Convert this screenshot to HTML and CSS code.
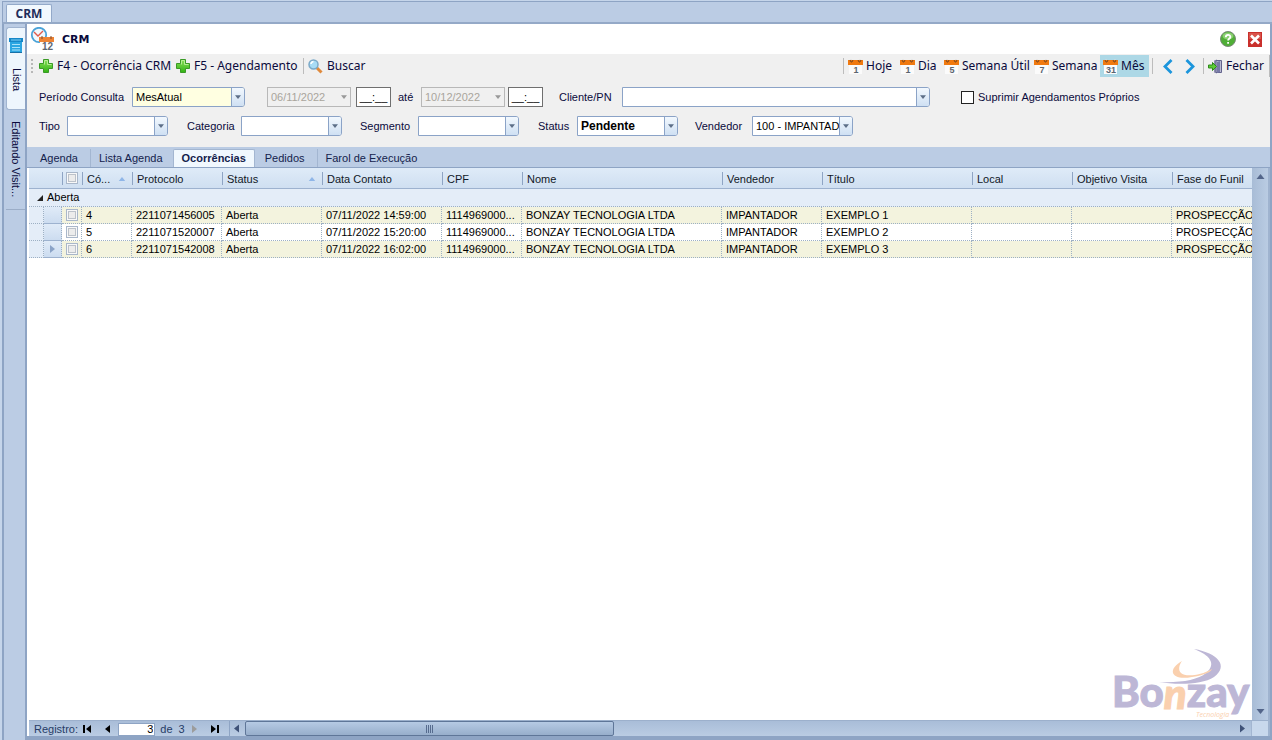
FILE: index.html
```
<!DOCTYPE html>
<html lang="pt-BR">
<head>
<meta charset="utf-8">
<title>CRM</title>
<link rel="stylesheet" href="styles.css">
</head>
<body>
<svg class="defs" width="0" height="0" aria-hidden="true">
  <defs>
    <linearGradient id="green" x1="0" y1="0" x2="0" y2="1"><stop offset="0" stop-color="#8be05a"/><stop offset="1" stop-color="#32b414"/></linearGradient>
    <symbol id="plus" viewBox="0 0 14 14"><path d="M4.5.5h5v4h4v5h-4v4h-5v-4h-4v-5h4z" fill="url(#green)" stroke="#3a9a26"/><path d="M5.5 5.5v-4h3v4h4" fill="none" stroke="#b5ee92"/></symbol>
    <symbol id="cal" viewBox="0 0 15 15"><path d="M1 5h13v10H1z" fill="#fbfbfb"/><path d="M0 1h15v5H0z" fill="#f0790f"/><path d="M2 1l1 2h1l1-2M10 1l1 2h1l1-2" fill="none" stroke="#7c4a20"/><path d="M3 0v1M12 0v1" stroke="#ddd"/></symbol>
    <symbol id="tri-d" viewBox="0 0 8 5"><path d="M0 0h8L4 5z"/></symbol>
    <symbol id="tri-u" viewBox="0 0 8 5"><path d="M0 5h8L4 0z"/></symbol>
    <symbol id="tri-l" viewBox="0 0 5 8"><path d="M5 0v8L0 4z"/></symbol>
    <symbol id="tri-r" viewBox="0 0 5 8"><path d="M0 0v8l5-4z"/></symbol>
  </defs>
</svg>
<div class="window">
  <div class="doc-tabs"><button class="doc-tab">CRM</button></div>
  <div class="workspace">
    <nav class="side">
      <button class="side-tab active">
        <svg width="14" height="16" viewBox="0 0 14 16"><path d="M0 1h14v4H0z" fill="#1687c8"/><path d="M1 5h12v10H1z" fill="#2ba6e2"/><path d="M2 3h10" stroke="#7fd0f5"/><path d="M3 7.500h8M3 10.500h8M3 13h8" stroke="#a9e2fa"/><path d="M1 15.500h12" stroke="#1670a8"/></svg>
        <span>Lista</span>
      </button>
      <button class="side-tab"><span>Editando Visit...</span></button>
    </nav>
    <main class="main">
      <header class="title">
        <svg width="26" height="24" viewBox="0 0 26 24"><circle cx="9" cy="8" r="7.200" fill="#f2f8fc" stroke="#4aa3d8" stroke-width="1.800"/><path d="M4 5l4 4 5-5" fill="none" stroke="#df5b4e" stroke-width="1.400"/><path d="M10 14h14v10H10z" fill="#fff"/><path d="M9 10h15v5H9z" fill="#ee8434"/><path d="M12 9v3M21 9v3" stroke="#7b4a30"/><text x="12" y="23" class="cal-big">12</text></svg>
        <h1>CRM</h1>
        <button class="icon-btn help" aria-label="Ajuda"><svg width="16" height="16" viewBox="0 0 16 16"><circle cx="8" cy="8" r="7.500" fill="#4fae36" stroke="#7a8a78"/><ellipse cx="8" cy="5" rx="5.500" ry="3.500" fill="#8ad071"/><path d="M5.800 6.300c0-3.200 4.600-3 4.600-.4 0 1.600-2.300 1.600-2.300 3.700M8.100 11v1.800" fill="none" stroke="#fff" stroke-width="1.800"/></svg></button>
        <button class="icon-btn" aria-label="Fechar janela"><svg width="14" height="15" viewBox="0 0 14 15"><path d="M0 0h14v15H0z" fill="#c9302c"/><path d="M1 1h12v6H1z" fill="#d9534a"/><path d="M3 3.500l8 8M11 3.500l-8 8" stroke="#fff" stroke-width="2.600"/></svg></button>
      </header>
      <div class="toolbar">
        <span class="grip"></span>
        <button class="tool new"><svg width="14" height="14"><use href="#plus"/></svg>F4 - Ocorrência CRM</button>
        <button class="tool new"><svg width="14" height="14"><use href="#plus"/></svg>F5 - Agendamento</button>
        <span class="sep"></span>
        <button class="tool"><svg width="15" height="15" viewBox="0 0 15 15"><path d="M8.500 8.500l5 5" stroke="#e08a3c" stroke-width="3"/><circle cx="5.500" cy="5.500" r="4.500" fill="#a8dcf6" stroke="#7ba9c8" stroke-width="1.500"/><path d="M3 5q0-2 2.500-2.500" stroke="#fff" fill="none" stroke-width="1.500"/></svg>Buscar</button>
        <span class="spacer"></span>
        <span class="sep"></span>
        <button class="tool cal day"><svg width="15" height="15"><use href="#cal"/><text x="8" y="14">1</text></svg>Hoje</button>
        <button class="tool cal one"><svg width="15" height="15"><use href="#cal"/><text x="8" y="14">1</text></svg>Dia</button>
        <button class="tool cal work"><svg width="15" height="15"><use href="#cal"/><text x="8" y="14">5</text></svg>Semana Útil</button>
        <button class="tool cal week"><svg width="15" height="15"><use href="#cal"/><text x="8" y="14">7</text></svg>Semana</button>
        <button class="tool cal month"><svg width="15" height="15"><use href="#cal"/><text x="8" y="14">31</text></svg>Mês</button>
        <span class="sep"></span>
        <button class="tool step" aria-label="Anterior"><svg width="10" height="15" viewBox="0 0 10 15"><path d="M8.500 1L2 7.500 8.500 14" fill="none" stroke="#1b95dc" stroke-width="2.800"/></svg></button>
        <button class="tool step" aria-label="Próximo"><svg width="10" height="15" viewBox="0 0 10 15"><path d="M1.500 1L8 7.500 1.500 14" fill="none" stroke="#1b95dc" stroke-width="2.800"/></svg></button>
        <span class="sep"></span>
        <button class="tool close"><svg width="15" height="15" viewBox="0 0 15 15"><path d="M6 1.500l3-1v14l-3-1z" fill="#8f8fb0"/><path d="M8 1.500h5.500v12H8z" fill="#b9bad2" stroke="#62638c"/><path d="M9 3l3-1v11l-3 1z" fill="#7779a6"/><path d="M.5 6h4V3.500L8.500 7.500l-4 4V9h-4z" fill="#5ccc35" stroke="#2f8a1c"/></svg>Fechar</button>
        <span class="sep"></span>
      </div>
      <form class="filters">
        <div class="row first">
          <label for="periodo">Período Consulta</label>
          <span class="combo period"><select id="periodo"><option>MesAtual</option></select><svg width="6" height="4"><use href="#tri-d"/></svg></span>
          <span class="combo date off"><input aria-label="Data inicial" value="06/11/2022" disabled><svg width="6" height="4"><use href="#tri-d"/></svg></span>
          <input class="time" aria-label="Hora inicial" value="__:__">
          <span>até</span>
          <span class="combo date off"><input aria-label="Data final" value="10/12/2022" disabled><svg width="6" height="4"><use href="#tri-d"/></svg></span>
          <input class="time" aria-label="Hora final" value="__:__">
          <label for="cliente">Cliente/PN</label>
          <span class="combo client"><select id="cliente"><option></option></select><svg width="6" height="4"><use href="#tri-d"/></svg></span>
          <label class="check"><input type="checkbox">Suprimir Agendamentos Próprios</label>
        </div>
        <div class="row second">
          <label for="tipo">Tipo</label>
          <span class="combo"><select id="tipo"><option></option></select><svg width="6" height="4"><use href="#tri-d"/></svg></span>
          <label for="categoria">Categoria</label>
          <span class="combo"><select id="categoria"><option></option></select><svg width="6" height="4"><use href="#tri-d"/></svg></span>
          <label for="segmento">Segmento</label>
          <span class="combo"><select id="segmento"><option></option></select><svg width="6" height="4"><use href="#tri-d"/></svg></span>
          <label for="status">Status</label>
          <span class="combo strong"><select id="status"><option>Pendente</option></select><svg width="6" height="4"><use href="#tri-d"/></svg></span>
          <label for="vendedor">Vendedor</label>
          <span class="combo"><select id="vendedor"><option>100 - IMPANTADOR</option></select><svg width="6" height="4"><use href="#tri-d"/></svg></span>
        </div>
      </form>
      <div class="tabs">
        <button class="tab">Agenda</button><button class="tab line">Lista Agenda</button><button class="tab active">Ocorrências</button><button class="tab">Pedidos</button><button class="tab line">Farol de Execução</button>
      </div>
      <section class="grid">
        <div class="view">
          <table>
            <colgroup><col class="w15"><col class="w18"><col class="w20"><col class="w50"><col class="w90"><col class="w100"><col class="w120"><col class="w80"><col class="w200"><col class="w100"><col class="w150"><col class="w100"><col class="w100"><col></colgroup>
            <thead><tr><th colspan="2"></th><th class="tick"><input type="checkbox" aria-label="Selecionar todos"></th><th>Có...<svg width="8" height="4"><use href="#tri-u"/></svg></th><th>Protocolo</th><th>Status<svg width="8" height="4"><use href="#tri-u"/></svg></th><th>Data Contato</th><th>CPF</th><th>Nome</th><th>Vendedor</th><th>Título</th><th>Local</th><th>Objetivo Visita</th><th>Fase do Funil</th></tr></thead>
            <tbody>
              <tr class="group"><td colspan="14"><svg width="6" height="6" viewBox="0 0 6 6"><path d="M6 0v6H0z" fill="#222"/></svg>Aberta</td></tr>
              <tr class="alt"><td class="indent"></td><td class="mark"></td><td class="tick"><input type="checkbox" aria-label="Selecionar 4"></td><td>4</td><td>2211071456005</td><td>Aberta</td><td>07/11/2022 14:59:00</td><td>1114969000...</td><td>BONZAY TECNOLOGIA LTDA</td><td>IMPANTADOR</td><td>EXEMPLO 1</td><td></td><td></td><td>PROSPECÇÃO</td></tr>
              <tr><td class="indent"></td><td class="mark"></td><td class="tick"><input type="checkbox" aria-label="Selecionar 5"></td><td>5</td><td>2211071520007</td><td>Aberta</td><td>07/11/2022 15:20:00</td><td>1114969000...</td><td>BONZAY TECNOLOGIA LTDA</td><td>IMPANTADOR</td><td>EXEMPLO 2</td><td></td><td></td><td>PROSPECÇÃO</td></tr>
              <tr class="alt"><td class="indent"></td><td class="mark"><svg width="5" height="8"><use href="#tri-r"/></svg></td><td class="tick"><input type="checkbox" aria-label="Selecionar 6"></td><td>6</td><td>2211071542008</td><td>Aberta</td><td>07/11/2022 16:02:00</td><td>1114969000...</td><td>BONZAY TECNOLOGIA LTDA</td><td>IMPANTADOR</td><td>EXEMPLO 3</td><td></td><td></td><td>PROSPECÇÃO</td></tr>
            </tbody>
          </table>
          <svg class="logo" width="138" height="72" viewBox="0 0 138 72">
            <text x="-2" y="59" class="brand">Bo<tspan class="peach" dy="2">n</tspan><tspan dy="-2">zay</tspan></text>
            <text x="82" y="69" class="sub">Tecnologia</text>
            <path d="M80 1C104 5 115 18 100 29C88 37 62 37 45 34C66 35 84 32 92 25C103 16 96 7 80 1Z" fill="#bdb7d6"/>
            <path d="M68 13C52 22 58 33 78 29C92 27 98 23 98 21C86 28 71 29 67 25C64 22 65 17 68 13Z" fill="#fad0ae"/>
          </svg>
        </div>
        <div class="vscroll"><svg width="9" height="5"><use href="#tri-u"/></svg><svg width="9" height="5"><use href="#tri-d"/></svg></div>
        <footer class="foot">
          <div class="pager">
            <label for="reg">Registro:</label>
            <button aria-label="Primeiro"><svg width="9" height="8" viewBox="0 0 9 8"><path d="M0 0h2v8H0zM8 0v8L3 4z"/></svg></button>
            <button aria-label="Registro anterior"><svg width="5" height="8"><use href="#tri-l"/></svg></button>
            <input id="reg" value="3">
            <span class="of">de</span><span>3</span>
            <button class="dim" aria-label="Próximo registro"><svg width="5" height="8"><use href="#tri-r"/></svg></button>
            <button aria-label="Último"><svg width="9" height="8" viewBox="0 0 9 8"><path d="M7 0h2v8H7zM1 0v8l5-4z"/></svg></button>
          </div>
          <div class="hscroll"><svg width="5" height="9"><use href="#tri-l"/></svg><div class="thumb"><i></i><i></i><i></i><i></i></div><svg class="end" width="5" height="9"><use href="#tri-r"/></svg></div>
          <div class="corner"></div>
        </footer>
      </section>
    </main>
  </div>
</div>
</body>
</html>
```
FILE: styles.css
```
* { box-sizing: border-box; }
body { margin: 0; background: #c5d5ea; color: #0a0a3c; font: 11px/13px "Liberation Sans", Arial, sans-serif; }
button, input, select { font: inherit; color: inherit; margin: 0; padding: 0; border: 0; border-radius: 0; background: none; }
svg { display: block; flex: none; }
.defs { position: absolute; }

.window { display: flex; flex-direction: column; height: 100vh; padding: 1px 0 0 2px; }
.doc-tabs { height: 23px; padding: 2px 0 0 3px; background: #bbcce4; border-top: 1px solid #8ea4c4; border-left: 1px solid #8ea4c4; border-bottom: 2px solid #94a9c7; }
.doc-tab { width: 46px; height: 18px; background: #f1f8fe; border: 1px solid #93a9c9; border-bottom: 0; border-radius: 2px 2px 0 0; font: bold 12px/16px "Open Sans", sans-serif; color: #1e2d5a; }
.workspace { flex: 1; min-height: 0; display: flex; border-left: 2px solid #8ea4c4; }
.side { width: 23px; padding: 3px 0 0 2px; background: #bbcce4; border-right: 2px solid #8ea4c4; }
.side-tab { display: flex; flex-direction: column; align-items: center; width: 19px; height: 100px; padding-top: 11px; border-bottom: 1px solid #9badc7; font-size: 11px; }
.side-tab.active { height: 83px; gap: 15px; padding-top: 9px; background: #eef6fd; border: 1px solid #a0b4d0; border-right: 0; border-radius: 3px 0 0 3px; }
.side-tab span { writing-mode: vertical-rl; white-space: nowrap; }
.main { flex: 1; min-width: 0; display: flex; flex-direction: column; border-right: 2px solid #8ea4c4; border-bottom: 4px solid #8ea4c4; background: #fff; }

.title { display: flex; align-items: center; height: 30px; padding: 0 8px 0 3px; }
.title h1 { flex: 1; margin: 2px 0 0 6px; font: bold 11px/14px "DejaVu Sans", sans-serif; }
.icon-btn { display: block; }
.help { margin-right: 12px; }
.cal-big { font: bold 10px "Liberation Sans", sans-serif; fill: #606773; }

.toolbar { display: flex; align-items: center; height: 24px; padding: 0 0 0 4px; background: #f0f0f0; font: 12px/16px "Noto Sans", "Open Sans", sans-serif; }
.grip { width: 2px; height: 14px; margin-right: 6px; border-left: 2px dotted #b8b8b8; }
.tool { display: flex; align-items: center; gap: 4px; height: 22px; white-space: nowrap; }
.new { width: 137px; }
.new + .new { width: 127px; }
.sep { width: 1px; height: 16px; margin-right: 4px; background: #bcbcbc; }
.spacer { flex: 1; }
.cal { gap: 3px; }
.cal text { font: bold 9px "Liberation Sans", sans-serif; fill: #5a6470; text-anchor: middle; }
.day { width: 52px; }
.one { width: 44px; }
.work { width: 90px; }
.week { width: 66px; }
.month { width: 49px; padding-left: 3px; margin-right: 3px; background: #add8e6; }
.step { width: 22px; justify-content: center; }
.step + .sep { margin-left: 2px; }
.close { width: 61px; gap: 3px; }
.close + .sep { height: 22px; margin: 0; }

.filters { display: grid; align-content: start; gap: 9px; height: 69px; padding: 9px 0 0 12px; background: #f0f0f0; }
.row { display: grid; align-items: center; height: 20px; white-space: nowrap; }
.first { grid-template-columns: 93px 135px 89px 42px 23px 87px 51px 63px 339px auto; }
.second { grid-template-columns: 28px 120px 54px 119px 58px 120px 39px 118px 57px auto; }
.combo { display: flex; align-items: center; position: relative; width: 101px; height: 20px; background: #fff; border: 1px solid #8ba3c7; border-radius: 0 3px 3px 0; color: #000; }
.combo select, .combo input { appearance: none; flex: 1; min-width: 0; height: 18px; padding: 0 0 0 3px; text-overflow: clip; outline: 0; }
.combo svg { box-sizing: content-box; padding: 7px 3px; height: 4px; fill: #5d6f88; background: linear-gradient(#f2f8fe, #cfe0f3); border-left: 1px solid #8ba3c7; border-radius: 0 2px 2px 0; }
.period { width: 113px; background: #ffffe1; }
.client { width: 308px; }
.date { width: 84px; }
.off { background: #f0f0f0; border-color: #b8b8b8; border-radius: 0; color: #a9a59c; }
.off svg { background: none; border: 0; fill: #999; }
.strong { font-weight: bold; font-size: 12px; }
.time { width: 35px; height: 20px; padding: 0; text-align: center; background: #fff; border: 1px solid #6f6f6f; color: #000; }
.check { display: flex; align-items: center; gap: 4px; }
.check input { appearance: none; width: 13px; height: 13px; background: #fff; border: 1px solid #222; }

.tabs { display: flex; align-items: flex-end; height: 21px; padding-left: 3px; background: #bbcce4; border-bottom: 1px solid #8ea4c4; }
.tab { height: 18px; padding: 0 11px 0 10px; color: #14224c; }
.tab.line { padding: 0 10px 0 8px; border-left: 1px solid #a3b6d1; }
.tab:first-child { padding-right: 12px; }
.tab:nth-child(4) { padding-right: 12px; }
.tab.active { padding: 0 8px; font-weight: bold; background: #f1f8fe; border: 1px solid #a3b6d1; border-bottom: 0; border-radius: 2px 2px 0 0; }

.grid { flex: 1; min-height: 0; display: grid; grid-template-columns: 1fr 16px; grid-template-rows: 1fr 16px; margin-left: 2px; border-right: 2px solid #9fb3cf; }
.view { position: relative; overflow: hidden; }
table { width: 100%; table-layout: fixed; border-collapse: separate; border-spacing: 0; color: #000; }
.w15 { width: 15px; } .w18 { width: 18px; } .w20 { width: 20px; } .w50 { width: 50px; } .w80 { width: 80px; }
.w90 { width: 90px; } .w100 { width: 100px; } .w120 { width: 120px; } .w150 { width: 150px; } .w200 { width: 200px; }
th, td { padding: 0 3px 0 4px; overflow: hidden; white-space: nowrap; text-align: left; }
th { position: relative; height: 21px; padding: 3px 3px 0 5px; font-weight: normal; color: #111827; background: linear-gradient(90deg, #8ea4c4 1px, transparent 1px) 0 4px / 100% 13px no-repeat, linear-gradient(#dfebf8, #cfdff1); border-bottom: 1px solid #9db2cf; }
th:first-child { background: linear-gradient(#dfebf8, #cfdff1); }
th svg { position: absolute; right: 6px; top: 9px; fill: #8fb6e8; }
td { height: 17px; border-bottom: 1px dotted #9db0c4; border-right: 1px dotted #9db0c4; }
.group td { height: 18px; padding-left: 8px; background: #e4edf8; border-right: 0; }
.group svg { display: inline-block; margin-right: 4px; }
.alt td { background: #f3f3de; }
.alt td.indent, td.indent { background: #e4edf8; }
.alt td.mark, td.mark { padding: 0 6px; background: linear-gradient(#e0ebf8, #ccdcf0); border-bottom: 1px solid #9db2cf; fill: #8ba3c7; }
th.tick, td.tick { padding: 0 4px; }
.tick input { display: block; appearance: none; width: 12px; height: 12px; background: #ececec; border: 1px solid #a9b7ca; box-shadow: inset 0 0 0 1px #f8f8f8, inset 0 0 0 2px #bcc2ca; }
td:last-child { padding-right: 0; border-right: 0; }

.logo { position: absolute; right: 0; bottom: 0; overflow: visible; }
.brand { font: 900 42px Lato, sans-serif; fill: #bdb7d6; stroke: #bdb7d6; stroke-width: 1px; }
.brand .peach, .sub { fill: #fad0ae; }
.brand .peach { stroke: #fad0ae; font-style: italic; }
.sub { font: italic 7px "Open Sans", sans-serif; }

.vscroll { display: flex; flex-direction: column; justify-content: space-between; align-items: center; padding: 6px 0 6px; background: linear-gradient(90deg, #a8bcd6, #bacce3); fill: #53658a; }
.foot { grid-column: 1 / 3; display: flex; background: linear-gradient(#a9bdd8, #bacce3); border-top: 1px solid #9cb0cc; }
.pager { display: flex; align-items: center; width: 201px; padding: 1px 5px 0; border-right: 1px solid #8ea4c4; color: #263c66; }
.pager button { display: grid; place-items: center; width: 21px; height: 12px; fill: #000; }
.pager input { width: 37px; height: 13px; margin: 0 5px 0 1px; padding-right: 1px; text-align: right; background: #fff; border: 1px solid #8ea4c4; color: #000; }
.of { margin-right: 6px; }
.pager .dim { fill: #9c9c9c; }
.hscroll { flex: 1; display: flex; align-items: center; padding: 0 6px 0 4px; fill: #3f5278; }
.thumb { display: flex; align-items: center; justify-content: center; gap: 1px; width: 369px; height: 15px; margin-left: 6px; background: linear-gradient(#b6cae4, #97aecb); border: 1px solid #5f7698; border-radius: 2px; }
.thumb i { width: 1px; height: 8px; background: #566b8e; }
.end { margin-left: auto; }
.corner { width: 17px; background: #c8d8ec; border-left: 1px solid #a3b6d1; }
```
